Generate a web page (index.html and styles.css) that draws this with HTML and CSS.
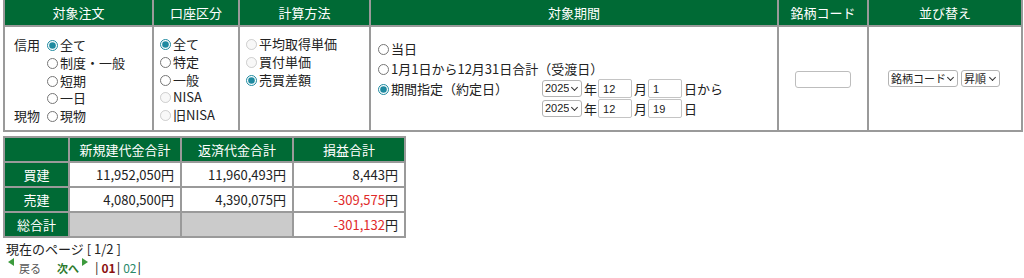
FILE: index.html
```html
<!DOCTYPE html>
<html lang="ja">
<head>
<meta charset="utf-8">
<link rel="stylesheet" href="styles.css">
</head>
<body>
<table class="cond">
  <colgroup>
    <col class="w-order"><col class="w-acct"><col class="w-calc"><col class="w-period"><col class="w-code"><col class="w-sort">
  </colgroup>
  <tr class="head">
    <th>対象注文</th><th>口座区分</th><th>計算方法</th><th>対象期間</th><th>銘柄コード</th><th>並び替え</th>
  </tr>
  <tr class="body">
    <td class="top">
      <div class="order">
        <span class="lab">信用</span><label><input type="radio" name="o" checked>全て</label>
        <span></span><label><input type="radio" name="o">制度・一般</label>
        <span></span><label><input type="radio" name="o">短期</label>
        <span></span><label><input type="radio" name="o">一日</label>
        <span class="lab">現物</span><label><input type="radio" name="o">現物</label>
      </div>
    </td>
    <td class="top">
      <div class="list">
        <label><input type="radio" name="a" checked>全て</label>
        <label><input type="radio" name="a">特定</label>
        <label><input type="radio" name="a">一般</label>
        <label><input type="radio" name="a" disabled>NISA</label>
        <label><input type="radio" name="a" disabled>旧NISA</label>
      </div>
    </td>
    <td class="top">
      <div class="list">
        <label><input type="radio" name="c" disabled>平均取得単価</label>
        <label><input type="radio" name="c" disabled>買付単価</label>
        <label><input type="radio" name="c" checked>売買差額</label>
      </div>
    </td>
    <td class="mid">
      <div class="period">
        <label class="full"><input type="radio" name="p">当日</label>
        <label class="full"><input type="radio" name="p">1月1日から12月31日合計（受渡日）</label>
        <label><input type="radio" name="p" checked>期間指定（約定日）</label>
        <div class="date">
          <span class="sel"><select class="yr"><option>2025</option></select></span><span class="u">年</span><input class="num" type="text" value="12"><span class="u">月</span><input class="num" type="text" value="1"><span class="u">日から</span>
        </div>
        <span></span>
        <div class="date">
          <span class="sel"><select class="yr"><option>2025</option></select></span><span class="u">年</span><input class="num" type="text" value="12"><span class="u">月</span><input class="num" type="text" value="19"><span class="u">日</span>
        </div>
      </div>
    </td>
    <td class="center"><input class="code" type="text"></td>
    <td class="center">
      <div class="sorts">
        <span class="sel"><select class="s1"><option>銘柄コード</option></select></span>
        <span class="sel"><select class="s2"><option>昇順</option></select></span>
      </div>
    </td>
  </tr>
</table>

<table class="sum">
  <colgroup><col class="w-lab"><col class="w-val"><col class="w-val"><col class="w-val"></colgroup>
  <tr class="shead"><th></th><th>新規建代金合計</th><th>返済代金合計</th><th>損益合計</th></tr>
  <tr><th>買建</th><td>11,952,050円</td><td>11,960,493円</td><td>8,443円</td></tr>
  <tr><th>売建</th><td>4,080,500円</td><td>4,390,075円</td><td><span class="neg">-309,575</span>円</td></tr>
  <tr><th>総合計</th><td class="gray"></td><td class="gray"></td><td><span class="neg">-301,132</span>円</td></tr>
</table>

<div class="page">現在のページ [ 1/2 ]</div>
<div class="nav">
  <span class="prev"><span class="tri-l"></span>戻る</span>
  <span class="next">次へ<span class="tri-r"></span></span>
  <span class="pages">|<b class="cur">01</b>|<span class="pg">02</span>|</span>
</div>
</body>
</html>
```
FILE: styles.css
```css
body {
  margin: 0;
  padding: 0 3px;
  font-family: "Noto Sans CJK JP", "Noto Sans", sans-serif;
  font-size: 13px;
  color: #222;
  background: #fff;
}

input[type="radio"] {
  width: 11px;
  height: 11px;
  margin: 0 2px 0 0;
  vertical-align: -1px;
  accent-color: #1f8aa0;
}

.cond {
  border-collapse: collapse;
  table-layout: fixed;
  width: 1018px;
}
.w-order { width: 149px; }
.w-acct { width: 86px; }
.w-calc { width: 131px; }
.w-period { width: 408px; }
.w-code { width: 90px; }
.w-sort { width: 154px; }

.cond th, .cond td {
  border: 2px solid #9a9a9a;
  padding: 0;
}
.cond th {
  border-top: 0;
  background: #006a35;
  color: #fff;
  font-weight: normal;
  height: 25px;
  line-height: 16px;
}
.cond td {
  height: 103px;
}
.cond td.top { vertical-align: top; }
.cond td.mid { vertical-align: middle; }
.cond td.center { vertical-align: middle; text-align: center; }

.order {
  display: grid;
  grid-template-columns: 33px auto;
  padding: 9px 0 0 9px;
  line-height: 17.75px;
}
.order label, .list label { white-space: nowrap; }

.list {
  display: flex;
  flex-direction: column;
  padding: 8px 0 0 6px;
  line-height: 17.75px;
}

.period {
  display: grid;
  grid-template-columns: 164px auto;
  grid-auto-rows: 20px;
  align-items: center;
  padding-left: 7px;
}
.period .full { grid-column: 1 / span 2; }
.date {
  display: flex;
  align-items: center;
}
.date .u { margin: 0 1px 0 2px; }

.sel {
  position: relative;
  display: inline-block;
  line-height: 0;
}
.sel::after {
  content: "";
  position: absolute;
  right: 5px;
  top: 5px;
  width: 4px;
  height: 4px;
  border-right: 1px solid #333;
  border-bottom: 1px solid #333;
  transform: rotate(45deg);
  pointer-events: none;
}
select {
  -webkit-appearance: none;
  appearance: none;
  font-family: "Liberation Sans", "Noto Sans CJK JP", sans-serif;
  font-size: 11px;
  height: 17px;
  box-sizing: border-box;
  padding: 0 12px 0 2px;
  border: 1px solid #b4b4b4;
  border-radius: 3px;
  background: #fff;
  color: #222;
  line-height: 15px;
}
.yr { width: 40px; }
.num {
  width: 34px;
  height: 19px;
  box-sizing: border-box;
  border: 1px solid #c4c4c4;
  border-radius: 2px;
  padding: 0 4px;
  font-family: "Liberation Sans", sans-serif;
  font-size: 11px;
  color: #222;
}
.code {
  width: 56px;
  height: 17px;
  box-sizing: border-box;
  border: 1px solid #bdbdbd;
  border-radius: 3px;
}
.sorts {
  display: flex;
  justify-content: center;
  gap: 3px;
  padding-right: 2px;
}
.s1 { width: 70px; font-family: "Noto Sans CJK JP", sans-serif; }
.s2 { width: 39px; font-family: "Noto Sans CJK JP", sans-serif; }

.sum {
  border-collapse: collapse;
  table-layout: fixed;
  width: 401px;
  margin-top: 4px;
}
.w-lab { width: 65px; }
.w-val { width: 112px; }
.sum th, .sum td {
  border: 2px solid #9a9a9a;
  height: 23px;
  padding: 0;
  line-height: 16px;
}
.sum th {
  background: #006a35;
  color: #fff;
  font-weight: normal;
}
.sum td {
  text-align: right;
  padding-right: 6px;
}
.sum td.gray { background: #cbcbcb; }
.neg { color: #e02a2a; }

.page {
  margin: 3px 0 0 3px;
  line-height: 16px;
}
.nav {
  display: flex;
  align-items: flex-end;
  margin: 4px 0 0 5px;
  font-size: 11px;
  line-height: 14px;
}
.prev { color: #555; display: flex; align-items: flex-start; }
.next {
  color: #2d7a2d;
  font-weight: bold;
  margin-left: 16px;
  display: flex;
  align-items: flex-start;
}
.tri-l {
  width: 0; height: 0;
  border-top: 4px solid transparent;
  border-bottom: 4px solid transparent;
  border-right: 6px solid #3c9a3c;
  margin: -3px 5px 0 0;
}
.tri-r {
  width: 0; height: 0;
  border-top: 4px solid transparent;
  border-bottom: 4px solid transparent;
  border-left: 6px solid #3c9a3c;
  margin: -3px 0 0 3px;
}
.pages {
  margin-left: 7px;
  font-size: 13px;
  color: #222;
}
.cur { color: #8b1010; margin: 0 1px 0 3px; font-size: 12px; }
.pg { color: #2a8a6a; margin: 0 1px 0 3px; font-size: 12px; }
```
